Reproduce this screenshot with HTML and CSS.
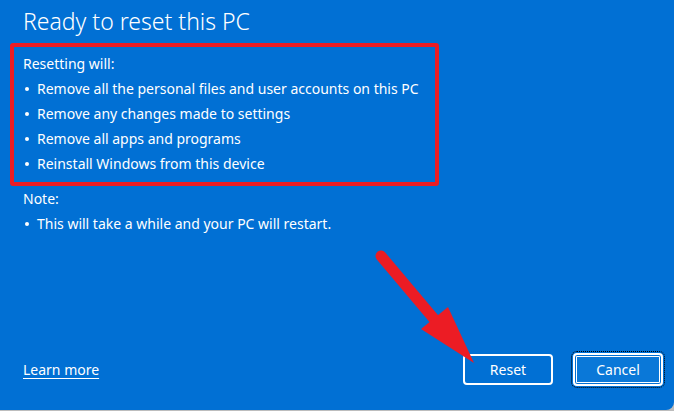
FILE: index.html
```html
<!DOCTYPE html>
<html lang="en">
<head>
<meta charset="utf-8">
<title>Ready to reset this PC</title>
<link rel="stylesheet" href="styles.css">
</head>
<body>
<div class="dialog">
  <h1 class="title">Ready to reset this PC</h1>
  <div class="highlight">
    <p class="line">Resetting will:</p>
    <ul class="list">
      <li>Remove all the personal files and user accounts on this PC</li>
      <li>Remove any changes made to settings</li>
      <li>Remove all apps and programs</li>
      <li>Reinstall Windows from this device</li>
    </ul>
  </div>
  <div class="note">
    <p class="line">Note:</p>
    <ul class="list">
      <li>This will take a while and your PC will restart.</li>
    </ul>
  </div>
  <div class="footer">
    <a class="learn" href="#">Learn more</a>
    <div class="buttons">
      <button class="btn">Reset</button>
      <button class="btn btn-focus">Cancel</button>
    </div>
  </div>
  <svg class="arrow" width="674" height="411" viewBox="0 0 674 411">
    <line x1="381" y1="256" x2="440" y2="326" stroke="#ec1c24" stroke-width="11" stroke-linecap="round"/>
    <polygon points="421,329 448,307 474,363" fill="#ec1c24"/>
  </svg>
</div>
</body>
</html>
```

FILE: styles.css
```css
html, body {
  margin: 0;
  padding: 0;
}
body {
  background: #bdbdbd;
  width: 674px;
  height: 411px;
  overflow: hidden;
  font-family: "Noto Sans", "Open Sans", sans-serif;
  color: #ffffff;
}
.dialog {
  position: relative;
  box-sizing: border-box;
  width: 674px;
  height: 410px;
  background: #0170d4;
  border-bottom-right-radius: 8px;
  padding: 0 0 0 10px;
  display: flex;
  flex-direction: column;
}
.title {
  margin: 0;
  padding: 5px 0 0 13px;
  font-size: 23px;
  font-weight: 300;
  line-height: 33px;
  height: 43px;
  box-sizing: border-box;
}
.highlight {
  width: 429px;
  box-sizing: border-box;
  border: 4px solid #ec1c24;
  border-radius: 3px;
  padding: 4px 0 6px 9px;
}
.note {
  padding: 0 0 0 13px;
}
.line {
  margin: 0;
  font-size: 14px;
  line-height: 25px;
  height: 25px;
}
.list {
  margin: 0;
  padding: 0;
  list-style: none;
}
.list li {
  position: relative;
  font-size: 14px;
  line-height: 25px;
  height: 25px;
  padding-left: 14px;
  white-space: nowrap;
}
.list li::before {
  content: "";
  position: absolute;
  left: 2px;
  top: 11px;
  width: 4px;
  height: 4px;
  border-radius: 50%;
  background: #ffffff;
}
.footer {
  margin-top: auto;
  margin-bottom: 24px;
  display: flex;
  align-items: center;
  justify-content: space-between;
  padding: 0 11px 0 13px;
}
.learn {
  color: #ffffff;
  font-size: 14px;
  text-decoration: underline;
  text-underline-offset: 3px;
}
.buttons {
  display: flex;
  gap: 20px;
  align-items: center;
}
.btn {
  box-sizing: border-box;
  width: 90px;
  height: 31px;
  border: 2px solid #ffffff;
  border-radius: 4px;
  background: #0170d4;
  color: #ffffff;
  font-family: "Noto Sans", "Open Sans", sans-serif;
  font-size: 14px;
  padding: 0;
}
.btn-focus {
  height: 33px;
  background: #0a78d8;
  box-shadow: inset 0 0 0 1px #0170d4, inset 0 0 0 2px #ffffff;
  outline: 1px dotted #000000;
  outline-offset: 1px;
}
.arrow {
  position: absolute;
  left: 0;
  top: 0;
  pointer-events: none;
}
```
